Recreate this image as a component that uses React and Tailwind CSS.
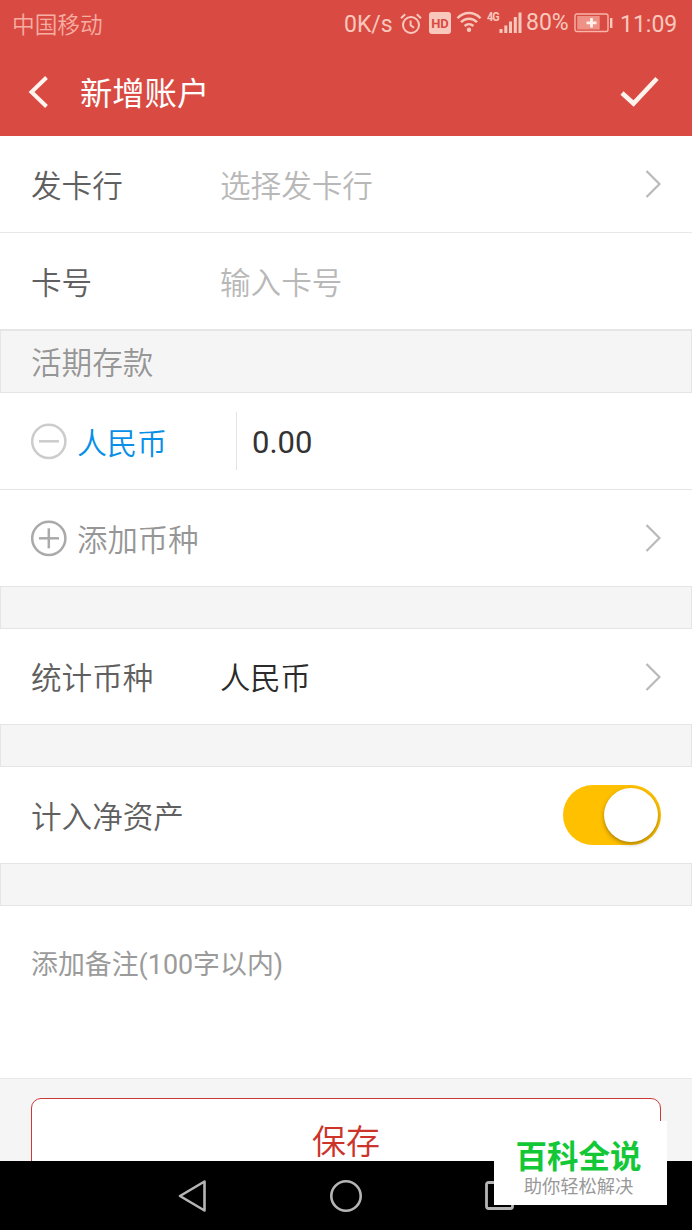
import clsx from 'clsx';

const ChevronRight = () => (
  <svg className="w-4 h-7 shrink-0" viewBox="0 0 16 28" fill="none" stroke="#b9b9b9" strokeWidth="2.2">
    <path d="M1.5 1 L14.5 14 L1.5 27" />
  </svg>
);

// Status bar icons share the washed-out pink of the system text
const AlarmIcon = () => (
  <svg className="w-[22px] h-[22px]" viewBox="0 0 22 22" fill="none" stroke="#f9c8bd" strokeWidth="2">
    <circle cx="11" cy="12" r="8" />
    <path d="M10.6 7.5 V12.3 L14 14.8" />
    <path d="M1 5.2 L5.2 1.2 M21 5.2 L16.8 1.2" />
  </svg>
);

const WifiIcon = () => (
  <svg className="w-[26px] h-[22px]" viewBox="0 0 26 22" fill="none" stroke="#f9c8bd" strokeWidth="2.4">
    <path d="M1.5 7.2 C8 0.3 18 0.3 24.5 7.2" />
    <path d="M5 11.2 C9.5 6.6 16.5 6.6 21 11.2" />
    <path d="M8.6 15 C11.2 12.6 14.8 12.6 17.4 15" />
    <circle cx="13" cy="18.8" r="2.2" fill="#f9c8bd" stroke="none" />
  </svg>
);

const SignalIcon = () => (
  <svg className="w-[24px] h-[22px]" viewBox="0 0 24 22" fill="#f9c8bd">
    <rect x="0.5" y="17" width="3" height="4" />
    <rect x="5.3" y="13.5" width="3" height="7.5" />
    <rect x="10" y="9.5" width="3" height="11.5" />
    <rect x="14.8" y="5" width="3" height="16" />
    <rect x="19.5" y="0.5" width="3" height="20.5" />
  </svg>
);

const BatteryIcon = () => (
  <svg className="w-[40px] h-[20px]" viewBox="0 0 40 20" fill="none">
    <rect x="1" y="1" width="33" height="17.5" rx="2" stroke="#f9b5a9" strokeWidth="1.4" />
    <rect x="3.2" y="3" width="22.5" height="13.5" fill="#ee9287" />
    <path d="M17.5 5 V14.6 M12.5 9.8 H22.5" stroke="#fff0ea" strokeWidth="2.8" />
    <rect x="36" y="5" width="2.4" height="10" fill="#f9c8bd" />
  </svg>
);

const StatusBar = () => (
  <div className="flex items-center h-12 pl-3 text-[#f9c8bd] text-[23px] leading-none">
    <span className="w-[332px] mt-1 text-[22.7px] font-[350] text-[#f6ada2]">中国移动</span>
    <span className="w-14">0K/s</span>
    <AlarmIcon />
    <span className="ml-[7px] w-[22px] h-[22px] -mt-0.5 rounded-[3px] bg-[#f9c8bd] text-[#d94b42] text-[13px] font-bold flex items-center justify-center">
      HD
    </span>
    <span className="ml-[5px] -mt-1"><WifiIcon /></span>
    <span className="ml-[5px] mb-3.5 w-[12px] text-[12px] font-bold tracking-[-1px]">
      <span className="inline-block origin-left scale-x-90">4G</span>
    </span>
    <span className="-mt-0.5"><SignalIcon /></span>
    <span className="ml-[3px] w-[48px] -mt-1">80%</span>
    <span className="-mt-0.5"><BatteryIcon /></span>
    <span className="ml-[6px]">11:09</span>
  </div>
);

const Header = () => (
  <header className="h-[136px] bg-[#d94b42] shrink-0">
    <StatusBar />
    <div className="flex items-center h-[88px] pl-7 pr-8">
      <svg className="w-5 h-8" viewBox="0 0 20 32" fill="none" stroke="#fff3ee" strokeWidth="4">
        <path d="M18.5 1.5 L3.5 16 L18.5 30.5" />
      </svg>
      <h1 className="ml-8 mt-1 flex-1 text-white text-[32.3px] leading-none">新增账户</h1>
      <svg className="w-10 h-8" viewBox="0 0 40 32" fill="none" stroke="#fff3ee" strokeWidth="4.6">
        <path d="M2 17 L13.5 27.5 L37 2.5" />
      </svg>
    </div>
  </header>
);

const Row = ({ label, children, arrow = false, className = 'h-24' }) => (
  <div className={clsx('flex items-center px-[31px] bg-white text-[30.6px] leading-none', className)}>
    {label && <span className="w-[189px] pt-1.5 font-[350] text-[#606060]">{label}</span>}
    <div className="flex-1 flex items-center">{children}</div>
    {arrow && <ChevronRight />}
  </div>
);

const Spacer = () => (
  <div className="h-[43px] bg-[#f5f5f5] border border-[#e5e5e5]" />
);

const CircleIcon = ({ plus = false, color }) => (
  <svg className="w-[37px] h-[37px] shrink-0" viewBox="0 0 37 37" fill="none" stroke={color} strokeWidth="2.5">
    <circle cx="17.8" cy="18.3" r="16.6" />
    <path d="M8 18.3 H28" />
    {plus && <path d="M17.8 8.3 V28.3" />}
  </svg>
);

const NavBar = () => (
  <nav className="h-[69px] bg-black shrink-0 flex items-center">
    <svg className="ml-[177px] w-[30px] h-[34px]" viewBox="0 0 30 34" fill="none" stroke="#b5b5b5" strokeWidth="2.6" strokeLinejoin="round">
      <path d="M27.5 2.5 V31.5 L3 17 Z" />
    </svg>
    <svg className="ml-[122px] w-[34px] h-[34px]" viewBox="0 0 34 34" fill="none" stroke="#b5b5b5" strokeWidth="2.6">
      <circle cx="17" cy="17" r="14.7" />
    </svg>
    <svg className="ml-[121px] w-[32px] h-[32px]" viewBox="0 0 32 32" fill="none" stroke="#b5b5b5" strokeWidth="2.8">
      <rect x="2.5" y="2.5" width="26" height="26" rx="2" />
    </svg>
  </nav>
);

const App = () => {
  return (
    <div className="relative w-[692px] h-[1230px] overflow-hidden flex flex-col bg-white font-['Roboto','Noto_Sans_CJK_SC',sans-serif]">
      <Header />

      {/* Card info */}
      <Row label="发卡行" arrow className="h-[97px] border-b border-[#e8e8e8]">
        <span className="pt-1.5 font-[350] text-[#b8b8b8]">选择发卡行</span>
      </Row>
      <Row label="卡号">
        <span className="pt-1.5 font-[350] text-[#b8b8b8]">输入卡号</span>
      </Row>

      {/* Current deposit */}
      <div className="flex items-center h-16 pl-[30px] pt-1.5 bg-[#f5f5f5] border border-t-2 border-[#e5e5e5] text-[30.6px] leading-none font-[350] text-[#969696]">
        活期存款
      </div>
      <Row className="h-[97px] border-b border-[#e5e5e5]">
        <CircleIcon color="#cccccc" />
        <span className="ml-[9px] pt-1.5 w-[159px] text-[30px] font-[350] text-[#088fe8]">人民币</span>
        <span className="h-[58px] w-px bg-[#e3e3e3]" />
        <span className="ml-[15px] pt-0.5 text-[31px] text-[#333333]">0.00</span>
      </Row>
      <Row arrow>
        <CircleIcon plus color="#aaaaaa" />
        <span className="ml-[9px] pt-1.5 text-[30.4px] font-[350] text-[#969696]">添加币种</span>
      </Row>
      <Spacer />

      <Row label="统计币种" arrow className="h-[95px]">
        <span className="pt-1.5 text-[30.3px] font-[350] text-[#2b2b2b]">人民币</span>
      </Row>
      <Spacer />

      <Row label="计入净资产">
        <div className="ml-auto w-[98px] h-[60px] rounded-full bg-[#ffc000] flex items-center justify-end pr-[3px]">
          <div className="w-[54px] h-[54px] rounded-full bg-white shadow-[0_2px_4px_rgba(0,0,0,0.35)]" />
        </div>
      </Row>
      <Spacer />

      {/* Notes */}
      <div className="h-[172px] pl-[31px] pt-[46px] text-[26.9px] leading-none text-[#9b9b9b]">
        添加备注(100字以内)
      </div>

      {/* Save button, cut off by the navigation bar */}
      <div className="h-[83px] overflow-hidden px-[31px] pt-[19px] bg-[#f5f5f5] border-t border-[#e8e8e8]">
        <button className="w-full h-[92px] flex items-start justify-center pt-[26px] rounded-[10px] border-[1.5px] border-[#cc3a35] bg-white text-[34px] leading-none font-[350] text-[#cc3329]">
          保存
        </button>
      </div>
      <NavBar />

      {/* Watermark */}
      <div className="absolute left-[494px] top-[1121px] w-[173px] h-[84px] bg-white flex flex-col items-center">
        <span className="mt-[21px] -ml-1 text-[31.5px] leading-none font-bold text-[#12c837]">百科全说</span>
        <span className="mt-1 -ml-1 text-[18.3px] leading-none text-[#999999]">助你轻松解决</span>
      </div>
    </div>
  );
};

export default App;
